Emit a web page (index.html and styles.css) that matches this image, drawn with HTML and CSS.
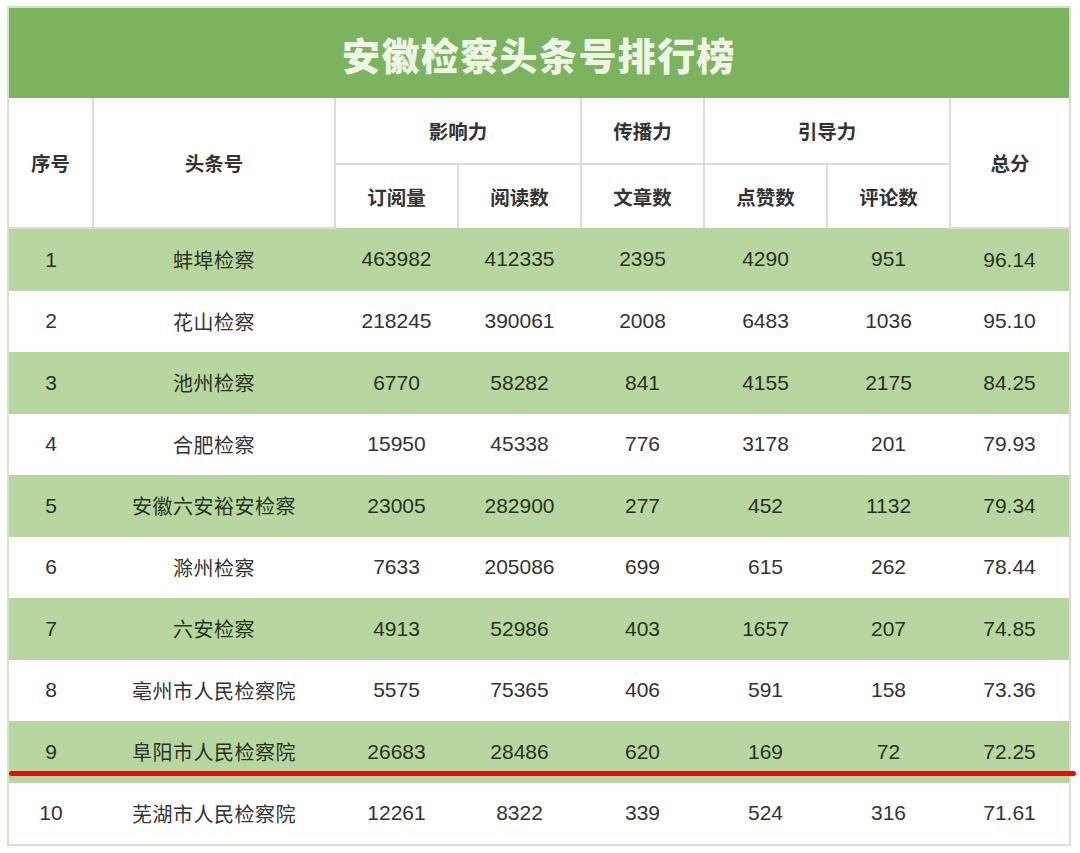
FILE: index.html
```html
<!DOCTYPE html>
<html lang="zh-CN">
<head>
<meta charset="utf-8">
<title>安徽检察头条号排行榜</title>
<link rel="stylesheet" href="styles.css">
</head>
<body>
<div class="board">
  <div class="title">安徽检察头条号排行榜</div>
  <table class="rank">
    <colgroup>
      <col class="c-idx"><col class="c-name"><col class="c-num"><col class="c-num"><col class="c-num"><col class="c-num"><col class="c-num"><col class="c-total">
    </colgroup>
    <thead>
      <tr class="h1">
        <th rowspan="2" class="first">序号</th>
        <th rowspan="2">头条号</th>
        <th colspan="2">影响力</th>
        <th>传播力</th>
        <th colspan="2">引导力</th>
        <th rowspan="2" class="last">总分</th>
      </tr>
      <tr class="h2">
        <th>订阅量</th>
        <th>阅读数</th>
        <th>文章数</th>
        <th>点赞数</th>
        <th>评论数</th>
      </tr>
    </thead>
    <tbody>
      <tr class="g"><td>1</td><td class="name">蚌埠检察</td><td>463982</td><td>412335</td><td>2395</td><td>4290</td><td>951</td><td>96.14</td></tr>
      <tr><td>2</td><td class="name">花山检察</td><td>218245</td><td>390061</td><td>2008</td><td>6483</td><td>1036</td><td>95.10</td></tr>
      <tr class="g"><td>3</td><td class="name">池州检察</td><td>6770</td><td>58282</td><td>841</td><td>4155</td><td>2175</td><td>84.25</td></tr>
      <tr><td>4</td><td class="name">合肥检察</td><td>15950</td><td>45338</td><td>776</td><td>3178</td><td>201</td><td>79.93</td></tr>
      <tr class="g"><td>5</td><td class="name">安徽六安裕安检察</td><td>23005</td><td>282900</td><td>277</td><td>452</td><td>1132</td><td>79.34</td></tr>
      <tr><td>6</td><td class="name">滁州检察</td><td>7633</td><td>205086</td><td>699</td><td>615</td><td>262</td><td>78.44</td></tr>
      <tr class="g"><td>7</td><td class="name">六安检察</td><td>4913</td><td>52986</td><td>403</td><td>1657</td><td>207</td><td>74.85</td></tr>
      <tr><td>8</td><td class="name">亳州市人民检察院</td><td>5575</td><td>75365</td><td>406</td><td>591</td><td>158</td><td>73.36</td></tr>
      <tr class="g"><td>9</td><td class="name">阜阳市人民检察院</td><td>26683</td><td>28486</td><td>620</td><td>169</td><td>72</td><td>72.25</td></tr>
      <tr><td>10</td><td class="name">芜湖市人民检察院</td><td>12261</td><td>8322</td><td>339</td><td>524</td><td>316</td><td>71.61</td></tr>
    </tbody>
  </table>
  <div class="mark"></div>
</div>
</body>
</html>
```

FILE: styles.css
```css
html, body {
  margin: 0;
  padding: 0;
  background: #ffffff;
}

body {
  font-family: "Liberation Sans", "Noto Sans CJK SC", sans-serif;
  color: #333333;
}

.board {
  position: relative;
  width: 1060px;
  margin: 6px 0 0 7px;
  border: 2px solid #d6e1ca;
  background: #ffffff;
}

.title {
  height: 90px;
  background: #7bb35f;
  color: #eef7e6;
  font-family: "Noto Sans CJK SC", sans-serif;
  font-weight: 900;
  font-size: 38px;
  letter-spacing: 1.4px;
  display: flex;
  align-items: center;
  justify-content: center;
}

.rank {
  width: 1060px;
  border-collapse: collapse;
  table-layout: fixed;
}

.c-idx { width: 84px; }
.c-name { width: 242px; }
.c-num { width: 123px; }
.c-total { width: 119px; }

.rank th {
  font-family: "Noto Sans CJK SC", sans-serif;
  font-weight: 700;
  font-size: 19.5px;
  color: #333333;
  background: #ffffff;
  border: 2px solid #dcddd6;
  border-top: none;
  padding: 0;
  text-align: center;
  vertical-align: middle;
}

.rank th.first { border-left: none; }
.rank th.last { border-right: none; }

.rank tr.h1 { height: 66px; }
.rank tr.h2 { height: 64px; }
.rank tr.h2 th { border-bottom: none; }

.rank td {
  height: 61.5px;
  padding: 0;
  text-align: center;
  vertical-align: middle;
  font-size: 21px;
  color: #333333;
}

.rank td.name {
  font-family: "Noto Sans CJK SC", sans-serif;
  font-size: 20px;
  letter-spacing: 0.5px;
}

.rank tr.g td {
  background: #b8d7a0;
  color: #28331f;
}

.mark {
  position: absolute;
  left: 0;
  top: 763px;
  width: 1067px;
  height: 5px;
  background: #f00808;
  border-radius: 3px;
}
```
